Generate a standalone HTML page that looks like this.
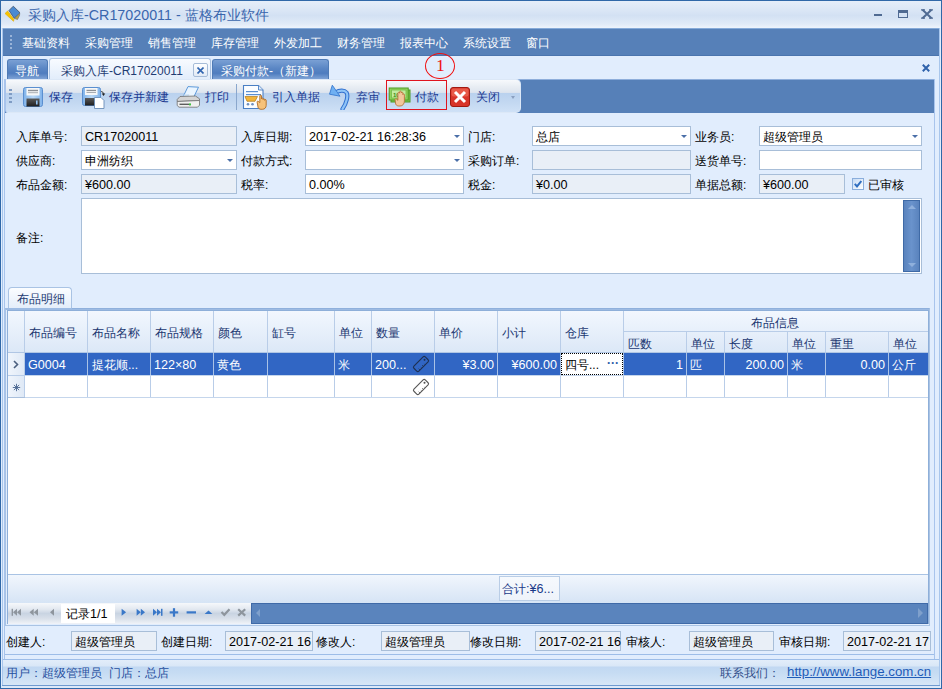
<!DOCTYPE html>
<html><head><meta charset="utf-8">
<style>
*{box-sizing:border-box}
html,body{margin:0;padding:0}
body{width:942px;height:689px;overflow:hidden;position:relative;background:#e1edfd;font-family:"Liberation Sans",sans-serif;font-size:12px;color:#000}
.a{position:absolute}
.t{position:absolute;white-space:nowrap;line-height:14px}
#title{left:0;top:0;width:942px;height:28px;background:linear-gradient(#e7effa 0,#dde8f6 30%,#d3e1f3 55%,#e0eaf7 85%,#eef4fc 100%)}
#menu{left:3px;top:28px;width:936px;height:28px;background:#5680b8;border-top:1px solid #86aad8;border-bottom:1px solid #4b75ae}
#menu .t{color:#fff;top:7px;font-size:12px}
#tabs{left:4px;top:56px;width:935px;height:23px;background:#e1edfd}
.fld{position:absolute;height:20px;border:1px solid #a8bed8;background:#fff;padding:3px 0 0 3px;white-space:nowrap;line-height:14px}
.ro{background:#e9eff7}
.lbl{position:absolute;white-space:nowrap;line-height:14px}
.dd{position:absolute;width:0;height:0;border-left:3px solid transparent;border-right:3px solid transparent;border-top:3px solid #4a6fa8}
</style></head><body>
<!-- window border -->

<div id="title" class="a">
  <svg class="a" style="left:0px;top:0px" width="28" height="28" viewBox="0 0 28 28">
    <path d="M5 13.5L7.6 11L14 19.5L13.5 21.3z" fill="#f7c400" stroke="#e0a800" stroke-width="0.6"/>
    <path d="M9 10.5L13.3 6.2L20 12.8L14.2 18.2z" fill="#4a8ad2" stroke="#4a5a70" stroke-width="0.9" stroke-linejoin="round"/>
    <path d="M14.5 18.5L19.8 13.3L19.5 15.5L17.5 19.5z" fill="#b8a040" stroke="#6f6f6f" stroke-width="0.6"/>
  </svg>
  <div class="t" style="left:28px;top:8px;font-size:14px;color:#3a66ad">采购入库<span style="font-size:14.3px">-CR17020011 - </span>蓝格布业软件</div>
  <div class="a" style="left:874px;top:14px;width:8px;height:2px;background:#4f6a92"></div>
  <div class="a" style="left:898px;top:10px;width:10px;height:8px;border:1px solid #4f6a92;border-top-width:3px"></div>
  <svg class="a" style="left:921px;top:9px" width="12" height="10" viewBox="0 0 12 10"><path d="M1.5 0.8L10.5 9.2M10.5 0.8L1.5 9.2" stroke="#4f6a92" stroke-width="2"/><path d="M0 0.8h4M8 0.8h4M0 9.2h4M8 9.2h4" stroke="#4f6a92" stroke-width="1.2"/></svg>
</div>
<div id="menu" class="a">
  <div class="a" style="left:7px;top:6px;width:2px;height:16px;background:repeating-linear-gradient(#9ab4d8 0 2px,transparent 2px 4px)"></div>
  <div class="t" style="left:19px">基础资料</div>
  <div class="t" style="left:82px">采购管理</div>
  <div class="t" style="left:145px">销售管理</div>
  <div class="t" style="left:208px">库存管理</div>
  <div class="t" style="left:271px">外发加工</div>
  <div class="t" style="left:334px">财务管理</div>
  <div class="t" style="left:397px">报表中心</div>
  <div class="t" style="left:460px">系统设置</div>
  <div class="t" style="left:523px">窗口</div>
</div>
<div id="tabs" class="a">
  <div class="a" style="left:3px;top:3px;width:41px;height:20px;border:1px solid #4f7bb6;border-bottom:none;border-radius:3px 3px 0 0;background:linear-gradient(#7aa0d4 0,#5a86c4 45%,#4f7dbf 70%,#7fa3d6 100%)"></div>
  <div class="t" style="left:11px;top:8px;color:#fff;font-size:12px">导航</div>
  <div class="a" style="left:45px;top:2px;width:162px;height:21px;border:1px solid #a9c2e2;border-bottom:none;border-radius:3px 3px 0 0;background:linear-gradient(#f8fbff,#e2edfb)"></div>
  <div class="t" style="left:57px;top:8px;color:#1f3c73;font-size:12px">采购入库-CR17020011</div>
  <div class="a" style="left:189px;top:7px;width:15px;height:14px;border:1px solid #a6bcd8;border-radius:2px;background:linear-gradient(#fdfeff,#e2eaf5)"></div>
  <svg class="a" style="left:193px;top:10.5px" width="7" height="7" viewBox="0 0 7 7"><path d="M0.5 0.5L6.5 6.5M6.5 0.5L0.5 6.5" stroke="#2f64b0" stroke-width="1.6"/></svg>
  <div class="a" style="left:208px;top:3px;width:117px;height:20px;border:1px solid #4f7bb6;border-bottom:none;border-radius:3px 3px 0 0;background:linear-gradient(#7aa0d4 0,#5a86c4 45%,#4f7dbf 70%,#7fa3d6 100%)"></div>
  <div class="t" style="left:217px;top:8px;color:#fff;font-size:12px">采购付款-（新建）</div>
  <svg class="a" style="left:918px;top:8px" width="8" height="8" viewBox="0 0 8 8"><path d="M0.8 0.8L7.2 7.2M7.2 0.8L0.8 7.2" stroke="#2f62ab" stroke-width="2"/></svg>
</div>
<div id="tbbar" class="a" style="left:4px;top:79px;width:931px;height:35px;background:#5680b8;border-top:1px solid #8eaedb"></div>
<div id="tb" class="a" style="left:5px;top:79px;width:516px;height:34px;border:1px solid #dce8f7;border-left-color:#a8c4ec;border-radius:0 5px 5px 3px;background:linear-gradient(#f7f9fc 0,#e9eef4 20%,#dde4ee 39%,#b9d1ee 40%,#c3d8f1 70%,#cfe1f6 100%)"></div>
<div id="form">
<div class="a" style="left:4px;top:113px;width:931px;height:195px;background:#e1edfd"></div>
<div class="lbl" style="left:16px;top:130px">入库单号:</div>
<div class="lbl" style="left:16px;top:154px">供应商:</div>
<div class="lbl" style="left:16px;top:178px">布品金额:</div>
<div class="lbl" style="left:241px;top:130px">入库日期:</div>
<div class="lbl" style="left:241px;top:154px">付款方式:</div>
<div class="lbl" style="left:241px;top:178px">税率:</div>
<div class="lbl" style="left:468px;top:130px">门店:</div>
<div class="lbl" style="left:468px;top:154px">采购订单:</div>
<div class="lbl" style="left:468px;top:178px">税金:</div>
<div class="lbl" style="left:695px;top:130px">业务员:</div>
<div class="lbl" style="left:695px;top:154px">送货单号:</div>
<div class="lbl" style="left:695px;top:178px">单据总额:</div>
<div class="fld ro" style="left:81px;top:126px;width:156px;height:20px"><span style="font-size:12.6px">CR17020011</span></div>
<div class="fld" style="left:81px;top:150px;width:156px;height:20px">申洲纺织</div><div class="dd" style="left:227px;top:159px"></div>
<div class="fld ro" style="left:81px;top:174px;width:156px;height:20px"><span style="font-size:12.6px">¥600.00</span></div>
<div class="fld" style="left:305px;top:126px;width:159px;height:20px"><span style="font-size:12.6px">2017-02-21 16:28:36</span></div><div class="dd" style="left:454px;top:135px"></div>
<div class="fld" style="left:305px;top:150px;width:159px;height:20px"></div><div class="dd" style="left:454px;top:159px"></div>
<div class="fld" style="left:305px;top:174px;width:159px;height:20px"><span style="font-size:12.6px">0.00%</span></div>
<div class="fld" style="left:532px;top:126px;width:159px;height:20px">总店</div><div class="dd" style="left:681px;top:135px"></div>
<div class="fld ro" style="left:532px;top:150px;width:159px;height:20px"></div>
<div class="fld ro" style="left:532px;top:174px;width:159px;height:20px"><span style="font-size:12.6px">¥0.00</span></div>
<div class="fld" style="left:759px;top:126px;width:163px;height:20px">超级管理员</div><div class="dd" style="left:912px;top:135px"></div>
<div class="fld" style="left:759px;top:150px;width:163px;height:20px"></div>
<div class="fld ro" style="left:759px;top:174px;width:86px;height:20px"><span style="font-size:12.6px">¥600.00</span></div>
<div class="a" style="left:852px;top:178px;width:12px;height:12px;border:1px solid #8aaedc;background:linear-gradient(135deg,#c6dbf5,#ffffff)"></div>
<svg class="a" style="left:854px;top:180px" width="8" height="8" viewBox="0 0 8 8"><path d="M0.8 3.8l2.2 2.6L7.3 1" fill="none" stroke="#2f6ec0" stroke-width="2"/></svg>
<div class="lbl" style="left:868px;top:178px">已审核</div>
<div class="lbl" style="left:16px;top:231px">备注:</div>
<div class="fld" style="left:81px;top:198px;width:841px;height:76px"></div>
<div class="a" style="left:903px;top:200px;width:17px;height:72px;background:linear-gradient(90deg,#5a83bd,#6a93cc 50%,#5a83bd);border:1px solid #3f6aa6"></div>
<div class="a" style="left:908px;top:205px;width:0;height:0;border-left:4px solid transparent;border-right:4px solid transparent;border-bottom:4px solid #8fb0dc"></div>
<div class="a" style="left:908px;top:263px;width:0;height:0;border-left:4px solid transparent;border-right:4px solid transparent;border-top:4px solid #8fb0dc"></div>
</div>
<div id="grid">
<div class="a" style="left:4px;top:283px;width:931px;height:376px;background:#e1edfd"></div>
<div class="a" style="left:8px;top:287px;width:64px;height:22px;border:1px solid #a9c3e4;border-bottom:none;border-radius:4px 4px 0 0;background:linear-gradient(#fbfdff,#e3edfa)"></div>
<div class="t" style="left:17px;top:292px;color:#1f3c73">布品明细</div>
<div class="a" style="left:5px;top:308px;width:925px;height:318px;border:1px solid #a9c3e4;border-top:2px solid #9dbbe3"></div>
<div class="a" style="left:72px;top:308px;width:857px;height:1px;background:#8fb0dc"></div>
<div class="a" style="left:7px;top:310px;width:922px;height:314px;border:1px solid #8eafd9;background:#fff"></div>
<div class="a" style="left:8px;top:311px;width:920px;height:41px;background:linear-gradient(#f2f7fe,#dce8f7)"></div>
<div class="a" style="left:24px;top:311px;width:1px;height:87px;background:#b9cde8"></div>
<div class="a" style="left:87px;top:311px;width:1px;height:87px;background:#b9cde8"></div>
<div class="a" style="left:150px;top:311px;width:1px;height:87px;background:#b9cde8"></div>
<div class="a" style="left:213px;top:311px;width:1px;height:87px;background:#b9cde8"></div>
<div class="a" style="left:267px;top:311px;width:1px;height:87px;background:#b9cde8"></div>
<div class="a" style="left:334px;top:311px;width:1px;height:87px;background:#b9cde8"></div>
<div class="a" style="left:371px;top:311px;width:1px;height:87px;background:#b9cde8"></div>
<div class="a" style="left:434px;top:311px;width:1px;height:87px;background:#b9cde8"></div>
<div class="a" style="left:497px;top:311px;width:1px;height:87px;background:#b9cde8"></div>
<div class="a" style="left:560px;top:311px;width:1px;height:87px;background:#b9cde8"></div>
<div class="a" style="left:623px;top:311px;width:1px;height:87px;background:#b9cde8"></div>
<div class="a" style="left:686px;top:331px;width:1px;height:67px;background:#b9cde8"></div>
<div class="a" style="left:724px;top:331px;width:1px;height:67px;background:#b9cde8"></div>
<div class="a" style="left:787px;top:331px;width:1px;height:67px;background:#b9cde8"></div>
<div class="a" style="left:825px;top:331px;width:1px;height:67px;background:#b9cde8"></div>
<div class="a" style="left:888px;top:331px;width:1px;height:67px;background:#b9cde8"></div>
<div class="a" style="left:623px;top:331px;width:305px;height:1px;background:#b9cde8"></div>
<div class="a" style="left:8px;top:352px;width:920px;height:1px;background:#b0c6e4"></div>
<div class="t" style="left:29px;top:326px;color:#1a3670">布品编号</div>
<div class="t" style="left:92px;top:326px;color:#1a3670">布品名称</div>
<div class="t" style="left:155px;top:326px;color:#1a3670">布品规格</div>
<div class="t" style="left:218px;top:326px;color:#1a3670">颜色</div>
<div class="t" style="left:272px;top:326px;color:#1a3670">缸号</div>
<div class="t" style="left:339px;top:326px;color:#1a3670">单位</div>
<div class="t" style="left:376px;top:326px;color:#1a3670">数量</div>
<div class="t" style="left:439px;top:326px;color:#1a3670">单价</div>
<div class="t" style="left:502px;top:326px;color:#1a3670">小计</div>
<div class="t" style="left:565px;top:326px;color:#1a3670">仓库</div>
<div class="t" style="left:751px;top:316px;color:#1a3670">布品信息</div>
<div class="t" style="left:628px;top:337px;color:#1a3670">匹数</div>
<div class="t" style="left:691px;top:337px;color:#1a3670">单位</div>
<div class="t" style="left:729px;top:337px;color:#1a3670">长度</div>
<div class="t" style="left:792px;top:337px;color:#1a3670">单位</div>
<div class="t" style="left:830px;top:337px;color:#1a3670">重里</div>
<div class="t" style="left:893px;top:337px;color:#1a3670">单位</div>
<div class="a" style="left:8px;top:353px;width:16px;height:45px;background:linear-gradient(90deg,#f0f5fc,#dfe9f6)"></div>
<div class="a" style="left:8px;top:375px;width:16px;height:1px;background:#b9cde8"></div>
<svg class="a" style="left:13px;top:360px" width="6" height="9" viewBox="0 0 6 9"><path d="M1 1l3.5 3.5L1 8" fill="none" stroke="#4b5f7e" stroke-width="1.6"/></svg>
<svg class="a" style="left:12px;top:383px" width="9" height="9" viewBox="0 0 9 9"><path d="M4.5 0.8v7.4M0.8 4.5h7.4M1.9 1.9l5.2 5.2M7.1 1.9l-5.2 5.2" stroke="#4a6590" stroke-width="0.9"/></svg><div class="a" style="left:8px;top:397px;width:17px;height:1px;background:#a9bfdc"></div>
<div class="a" style="left:25px;top:353px;width:903px;height:22px;background:#3166c4"></div>
<div class="a" style="left:87px;top:353px;width:1px;height:22px;background:#a9c2e6"></div>
<div class="a" style="left:150px;top:353px;width:1px;height:22px;background:#a9c2e6"></div>
<div class="a" style="left:213px;top:353px;width:1px;height:22px;background:#a9c2e6"></div>
<div class="a" style="left:267px;top:353px;width:1px;height:22px;background:#a9c2e6"></div>
<div class="a" style="left:334px;top:353px;width:1px;height:22px;background:#a9c2e6"></div>
<div class="a" style="left:371px;top:353px;width:1px;height:22px;background:#a9c2e6"></div>
<div class="a" style="left:434px;top:353px;width:1px;height:22px;background:#a9c2e6"></div>
<div class="a" style="left:497px;top:353px;width:1px;height:22px;background:#a9c2e6"></div>
<div class="a" style="left:560px;top:353px;width:1px;height:22px;background:#a9c2e6"></div>
<div class="a" style="left:623px;top:353px;width:1px;height:22px;background:#a9c2e6"></div>
<div class="a" style="left:686px;top:353px;width:1px;height:22px;background:#a9c2e6"></div>
<div class="a" style="left:724px;top:353px;width:1px;height:22px;background:#a9c2e6"></div>
<div class="a" style="left:787px;top:353px;width:1px;height:22px;background:#a9c2e6"></div>
<div class="a" style="left:825px;top:353px;width:1px;height:22px;background:#a9c2e6"></div>
<div class="a" style="left:888px;top:353px;width:1px;height:22px;background:#a9c2e6"></div>
<div class="a" style="left:25px;top:375px;width:903px;height:1px;background:#c5d6ec"></div>
<div class="a" style="left:25px;top:397px;width:903px;height:1px;background:#c5d6ec"></div>
<div class="a" style="left:561px;top:353px;width:62px;height:22px;background:#fff;border:1px dotted #000"></div>
<div class="t" style="left:28px;top:358px;color:#fff;font-size:12.6px">G0004</div>
<div class="t" style="left:92px;top:358px;color:#fff">提花顺...</div>
<div class="t" style="left:154px;top:358px;color:#fff;font-size:12.6px">122×80</div>
<div class="t" style="left:217px;top:358px;color:#fff">黄色</div>
<div class="t" style="left:338px;top:358px;color:#fff">米</div>
<div class="t" style="left:375px;top:358px;color:#fff;font-size:12.6px">200...</div>
<div class="t" style="left:565px;top:358px;color:#000">四号...</div>
<div class="t" style="left:607px;top:356px;color:#2a5aa8;font-weight:bold">···</div>
<div class="t" style="left:416px;width:78px;text-align:right;top:358px;color:#fff;font-size:12.6px">¥3.00</div>
<div class="t" style="left:479px;width:78px;text-align:right;top:358px;color:#fff;font-size:12.6px">¥600.00</div>
<div class="t" style="left:605px;width:78px;text-align:right;top:358px;color:#fff;font-size:12.6px">1</div>
<div class="t" style="left:706px;width:78px;text-align:right;top:358px;color:#fff;font-size:12.6px">200.00</div>
<div class="t" style="left:807px;width:78px;text-align:right;top:358px;color:#fff;font-size:12.6px">0.00</div>
<div class="t" style="left:690px;top:358px;color:#fff">匹</div>
<div class="t" style="left:791px;top:358px;color:#fff">米</div>
<div class="t" style="left:892px;top:358px;color:#fff">公斤</div>
<svg class="a" style="left:409px;top:352px" width="24" height="46" viewBox="0 0 24 46">
<g transform="translate(12,12) rotate(-45)"><rect x="-8" y="-3.5" width="16" height="7" rx="1.5" fill="none" stroke="#1e3050" stroke-width="1.1"/><path d="M-5 3.5v-1.8M-2.5 3.5v-1.2M0 3.5v-1.8M2.5 3.5v-1.2" stroke="#1e3050" stroke-width="0.8"/><circle cx="5.5" cy="-0.5" r="1" fill="#1e3050"/></g>
<g transform="translate(12,35) rotate(-45)"><rect x="-8" y="-3.5" width="16" height="7" rx="1.5" fill="none" stroke="#555" stroke-width="1.1"/><path d="M-5 3.5v-1.8M-2.5 3.5v-1.2M0 3.5v-1.8M2.5 3.5v-1.2" stroke="#555" stroke-width="0.8"/><circle cx="5.5" cy="-0.5" r="1" fill="#555"/></g>
</svg>
<div class="a" style="left:8px;top:574px;width:920px;height:29px;border-top:1px solid #a9c3e4;background:linear-gradient(#f1f6fd,#d6e4f5)"></div>
<div class="a" style="left:499px;top:576px;width:61px;height:25px;border:1px solid #b9cde6;background:linear-gradient(#f6f9fd,#eef3fa)"></div>
<div class="t" style="left:502px;top:582px;color:#1a3a88">合计<span style="font-size:12.6px">:¥6...</span></div>
<div class="a" style="left:8px;top:603px;width:920px;height:21px;background:linear-gradient(#f6f8fb 0,#e2e8f0 30%,#c9d4e2 50%,#d9e0ea 75%,#f0f3f8 100%)"></div>
<div class="a" style="left:61px;top:604px;width:54px;height:19px;background:#fff"></div>
<div class="t" style="left:66px;top:607px;color:#000">记录<span style="font-size:12.6px">1/1</span></div>
<div class="a" style="left:251px;top:603px;width:677px;height:21px;background:#5a84bd;border:1px solid #3f6aa8"></div>
<div class="a" style="left:256px;top:609px;width:0;height:0;border-top:4px solid transparent;border-bottom:4px solid transparent;border-right:4px solid #7fa0cc"></div>
<div class="a" style="left:918px;top:608px;width:0;height:0;border-top:5px solid transparent;border-bottom:5px solid transparent;border-left:5px solid #7fa0cc"></div>
<svg class="a" style="left:8px;top:603px" width="244" height="21" viewBox="0 0 244 21">
<g fill="#8e959d"><rect x="3.6" y="5.8" width="1.4" height="7"/><path d="M5 9.3l4-3.5v7z"/><path d="M9 9.3l4-3.5v7z"/>
<path d="M21.5 9.3l4.2-3.5v7z"/><path d="M25.8 9.3l4.2-3.5v7z"/>
<path d="M42 9.3l4-3.5v7z"/></g>
<g fill="#3a78c8"><path d="M113.6 5.8v7l4.5-3.5z"/>
<path d="M128.6 5.8v7l4.2-3.5z"/><path d="M132.8 5.8v7l4.2-3.5z"/>
<path d="M145 5.8v7l4-3.5z"/><path d="M149 5.8v7l4-3.5z"/><rect x="153" y="5.8" width="1.5" height="7"/>
<rect x="161.7" y="8.3" width="8.5" height="2.2"/><rect x="164.9" y="5.2" width="2.2" height="8.5"/>
<rect x="178.6" y="8.3" width="9.4" height="2.2"/>
<path d="M196.6 11l3.9-3.6 3.9 3.6z"/></g>
<path d="M213.5 9l2.8 2.8L221.5 6.3" fill="none" stroke="#8e959d" stroke-width="2.2"/>
<path d="M230.2 6.2l7 6.4M237.2 6.2l-7 6.4" fill="none" stroke="#8e959d" stroke-width="2.2"/>
</svg>
<div class="a" style="left:4px;top:626px;width:931px;height:29px;border-bottom:1px solid #9dbde8;background:#e1edfd"></div>
<div class="lbl" style="left:6px;top:635px">创建人:</div>
<div class="lbl" style="left:161px;top:635px">创建日期:</div>
<div class="lbl" style="left:316px;top:635px">修改人:</div>
<div class="lbl" style="left:470px;top:635px">修改日期:</div>
<div class="lbl" style="left:626px;top:635px">审核人:</div>
<div class="lbl" style="left:779px;top:635px">审核日期:</div>
<div class="fld ro" style="left:71px;top:631px;width:86px;height:20px">超级管理员</div>
<div class="fld ro" style="left:225px;top:631px;width:88px;height:20px"><span style="font-size:12.6px">2017-02-21 16</span></div>
<div class="fld ro" style="left:381px;top:631px;width:89px;height:20px">超级管理员</div>
<div class="fld ro" style="left:535px;top:631px;width:86px;height:20px"><span style="font-size:12.6px">2017-02-21 16</span></div>
<div class="fld ro" style="left:689px;top:631px;width:85px;height:20px">超级管理员</div>
<div class="fld ro" style="left:843px;top:631px;width:88px;height:20px"><span style="font-size:12.6px">2017-02-21 17</span></div>
<div class="a" style="left:2px;top:659px;width:938px;height:27px;border-top:1px solid #9dbde8;background:linear-gradient(#e2edfa 0,#d9e7f7 6px,#c1d8f2 7px,#c6dcf3 50%,#d8e7f7 100%)"></div>
<div class="t" style="left:6px;top:666px;color:#2850a0">用户：超级管理员&nbsp; 门店：总店</div>
<div class="t" style="left:720px;top:666px;color:#33508a">联系我们：</div>
<div class="t" style="left:787px;top:665px;color:#1f5cb8;text-decoration:underline;font-size:13.3px">http://www.lange.com.cn</div>
</div>
<div id="frame">
<div class="a" style="left:0;top:0;width:942px;height:1px;background:#3068a8"></div>
<div class="a" style="left:0;top:688px;width:942px;height:1px;background:#3068a8"></div>
<div class="a" style="left:0;top:0;width:1px;height:689px;background:#3068a8"></div>
<div class="a" style="left:941px;top:0;width:1px;height:689px;background:#3068a8"></div>
<div class="a" style="left:2px;top:28px;width:1px;height:658px;background:#a8c6ec"></div>
<div class="a" style="left:939px;top:28px;width:1px;height:658px;background:#a8c6ec"></div>
<div class="a" style="left:2px;top:685px;width:938px;height:1px;background:#6f9ad0"></div><div class="a" style="left:1px;top:686px;width:940px;height:2px;background:#dce9f9"></div>
<div class="a" style="left:4px;top:79px;width:1px;height:580px;background:#a8c4ec"></div>
<div class="a" style="left:934px;top:79px;width:1px;height:580px;background:#a8c4ec"></div>

</div>
<div id="tbc">
  <div class="a" style="left:9px;top:89px;width:3px;height:16px;background:repeating-linear-gradient(#7f9cc4 0 2px,transparent 2px 4px)"></div>
  <!-- save -->
  <svg class="a" style="left:23px;top:87px" width="20" height="20" viewBox="0 0 20 20">
    <defs><linearGradient id="fb" x1="0" y1="0" x2="1" y2="0"><stop offset="0" stop-color="#7fb2ea"/><stop offset=".5" stop-color="#b9d8f6"/><stop offset="1" stop-color="#7fb2ea"/></linearGradient>
    <linearGradient id="fd" x1="0" y1="0" x2="0" y2="1"><stop offset="0" stop-color="#5a5a5a"/><stop offset="1" stop-color="#1e1e1e"/></linearGradient></defs>
    <rect x="0.5" y="0.5" width="19" height="19" rx="2" fill="url(#fb)" stroke="#5a8fd0"/>
    <rect x="3.5" y="1" width="13" height="7.5" fill="#f6f7f8"/>
    <rect x="5" y="2.8" width="10" height="1.4" fill="#8d9196"/><rect x="5" y="5.2" width="10" height="1" fill="#a9adb2"/>
    <rect x="3.5" y="11.5" width="13" height="8" fill="url(#fd)"/>
    <rect x="13" y="13.5" width="1.6" height="4" fill="#8fc0f0"/>
  </svg>
  <div class="t" style="left:49px;top:90px;color:#1b3990">保存</div>
  <!-- save & new -->
  <svg class="a" style="left:82px;top:87px" width="26" height="22" viewBox="0 0 26 22">
    <rect x="0.5" y="0.5" width="18" height="18" rx="2" fill="url(#fb)" stroke="#5a8fd0"/>
    <rect x="3" y="1" width="12.5" height="7" fill="#f6f7f8"/>
    <rect x="4.5" y="2.8" width="9.5" height="1.3" fill="#8d9196"/><rect x="4.5" y="5" width="9.5" height="1" fill="#a9adb2"/>
    <rect x="3" y="11" width="11" height="7.5" fill="url(#fd)"/>
    <path d="M12.5 10.5h6.5l3 3v8h-9.5z" fill="#fff" stroke="#6a8db8" stroke-width="0.9"/>
    <path d="M19 4.5q2.5 0 2.5 2.5" fill="none" stroke="#222" stroke-width="0.8"/>
    <path d="M19.8 6.5h3.4l-1.7 2.6z" fill="#222"/>
  </svg>
  <div class="t" style="left:109px;top:90px;color:#1b3990">保存并新建</div>
  <!-- print -->
  <svg class="a" style="left:176px;top:86px" width="25" height="22" viewBox="0 0 25 22">
    <path d="M12 0.6L22.5 1.2L17.5 11.5L7 11z" fill="#eaf5ff" stroke="#4d90d6" stroke-width="0.9"/>
    <path d="M8 8.5L13.5 8.3L12 11.3L7 11.2z" fill="#c9def2"/>
    <path d="M4 10.5L19.5 10L23.5 12.8V14.5L1.2 15.5V13.5z" fill="#d4d4d4" stroke="#6e6e6e" stroke-width="0.8"/>
    <path d="M1.2 15.5L23.5 14.5V19.2L21.5 21.2H3L1.2 19.5z" fill="#efefef" stroke="#6e6e6e" stroke-width="0.8"/>
    <rect x="3.5" y="17.6" width="9.5" height="1.4" fill="#5d5d5d"/>
    <rect x="13" y="17.4" width="2" height="2" fill="#3fc23f"/>
  </svg>
  <div class="t" style="left:205px;top:90px;color:#1b3990">打印</div>
  <div class="a" style="left:236px;top:84px;width:1px;height:26px;background:#8aa7cd"></div>
  <!-- import -->
  <svg class="a" style="left:242px;top:84px" width="28" height="26" viewBox="0 0 28 26">
    <path d="M1.5 1.5h15l4.5 4.5v18.5h-19.5z" fill="#fbfdff" stroke="#4a7fc4" stroke-width="1.1"/>
    <path d="M16.5 1.5v4.5h4.5" fill="#dfeaf7" stroke="#4a7fc4" stroke-width="0.9"/>
    <rect x="4" y="7" width="12" height="1.2" fill="#5b8fd0"/>
    <rect x="4" y="10" width="15" height="1.2" fill="#5b8fd0"/>
    <path d="M3 12.5h12.5l-2.5 4.8H5z" fill="#f2b43a" stroke="#b07a1a" stroke-width="0.7"/>
    <circle cx="6" cy="20.3" r="1.3" fill="#6d8fc0"/><circle cx="10.5" cy="20.3" r="1.3" fill="#6d8fc0"/>
    <path d="M15.2 18.6c-.6-.8.2-1.8 1.1-1.3l1.5 1.3V12c0-1.2 1.7-1.2 1.7 0v2.8c0-1.1 1.6-1.1 1.6 0v.7c0-1 1.6-1 1.6 0v.8c0-1 1.5-1 1.5 0v5c0 2.4-1.6 4-3.8 4h-1.3c-1.4 0-2.4-.8-3-1.8z" fill="#f6c27a" stroke="#b06c24" stroke-width="0.9"/>
  </svg>
  <div class="t" style="left:272px;top:90px;color:#1b3990">引入单据</div>
  <!-- undo -->
  <svg class="a" style="left:324px;top:82px" width="28" height="28" viewBox="0 0 28 28">
    <path d="M11.5 10.5c4-2.5 9-2.5 11 0c2 3 0 11-4 16.5" fill="none" stroke="#2f6fcf" stroke-width="4.2" stroke-linecap="round"/>
    <path d="M11.5 10.5c4-2.5 9-2.5 11 0c2 3 0 11-4 16.5" fill="none" stroke="#8fc4f7" stroke-width="2.2" stroke-linecap="round"/>
    <path d="M8.3 3.2L5.5 12.2L16 14.2z" fill="#6fb0f2" stroke="#3a7ad0" stroke-width="0.9" stroke-linejoin="round"/>
  </svg>
  <div class="t" style="left:356px;top:90px;color:#1b3990">弃审</div>
  <!-- pay -->
  <div class="a" style="left:386px;top:80px;width:61px;height:30px;border:1px solid #e0141e"></div>
  <svg class="a" style="left:386px;top:82px" width="28" height="28" viewBox="0 0 28 28">
    <rect x="5" y="8" width="19" height="12" fill="#7cc44c" stroke="#4f9a25" stroke-width="1"/>
    <rect x="3.2" y="6" width="19" height="12" fill="#8fd35c" stroke="#4f9a25" stroke-width="1"/>
    <rect x="5.5" y="8" width="14.5" height="8" fill="#c2eba0" stroke="#74bb48" stroke-width="0.8"/>
    <text x="7" y="14.5" font-size="6" font-family="Liberation Sans" font-weight="bold" fill="#3a8a1a">100</text>
    <path d="M9.2 18.2c-.6-.8.2-1.8 1.1-1.3l1.6 1.4V11.2c0-1.2 1.7-1.2 1.7 0v-1.2c0-1.2 1.7-1.2 1.7 0v1c0-1.1 1.6-1.1 1.6 0v1.6c0-1 1.5-1 1.5 0v6.2c0 3-1.6 5.2-4.4 5.2h-1.2c-1.5 0-2.5-.8-3.1-1.8z" fill="#f2c79c" stroke="#b9763c" stroke-width="0.9"/>
  </svg>
  <div class="t" style="left:415px;top:90px;color:#1b3990">付款</div>
  <!-- close -->
  <svg class="a" style="left:450px;top:87px" width="20" height="20" viewBox="0 0 20 20">
    <rect x="0.5" y="0.5" width="19" height="19" rx="2.5" fill="#d8352a" stroke="#a01a10"/>
    <rect x="1.5" y="1.5" width="17" height="8" rx="2" fill="#e85a48"/>
    <path d="M5 5L15 15M15 5L5 15" stroke="#fff" stroke-width="3"/>
  </svg>
  <div class="t" style="left:476px;top:90px;color:#1b3990">关闭</div>
  <div class="a" style="left:511px;top:96px;width:0;height:0;border-left:2.5px solid transparent;border-right:2.5px solid transparent;border-top:3px solid #8aa0c0"></div>
  <!-- red circle -->
  <div class="a" style="left:425px;top:53px;width:30px;height:26px;border:1.3px solid #f01010;border-radius:50%"></div>
  <div class="t" style="left:436px;top:56px;color:#f01010;font-family:'Liberation Serif',serif;font-size:17.5px;line-height:18px">1</div>
</div>
</body></html>
